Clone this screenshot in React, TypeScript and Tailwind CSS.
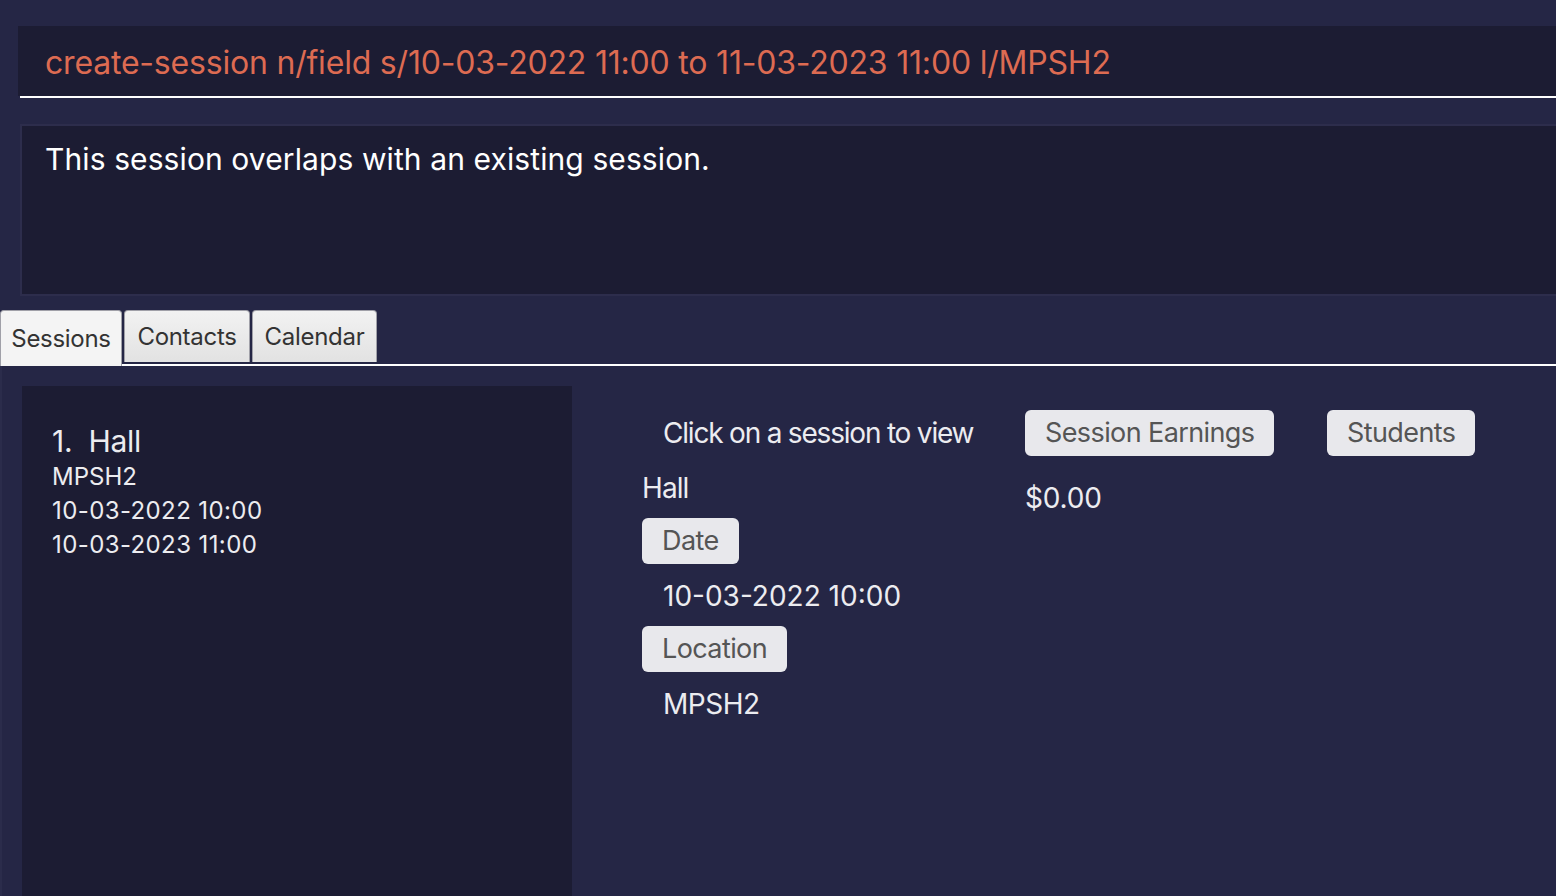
import {FC} from 'react';

const font = {fontFamily: 'Inter, "Noto Sans", sans-serif'};

const Pill: FC<{label: string; className?: string}> = ({label, className = ''}) => (
  <div
    className={`flex h-[46px] items-center rounded-md bg-[#e8e8ec] px-[20px] text-[27px] tracking-[-0.6px] text-[#555555] ${className}`}
  >
    {label}
  </div>
);

const Tab: FC<{label: string; active?: boolean; width: string}> = ({label, active, width}) => (
  <div
    className={`flex items-center justify-center rounded-t-[4px] border border-b-0 border-[#a0a0a8] text-[24px] tracking-[-0.3px] text-[#333333] ${width} ${
      active ? 'relative z-10 h-[56px] bg-[#f4f4f4]' : 'h-[52px] bg-gradient-to-b from-[#f2f2f2] to-[#e2e2e2]'
    }`}
  >
    {label}
  </div>
);

export default function App() {
  return (
    <div className="h-[896px] w-[1556px] overflow-hidden bg-[#252645]" style={font}>
      {/* command box */}
      <div className="pt-[26px] pl-[18px]">
        <div className="flex h-[70px] items-center bg-[#1c1c33] pt-[3px] pl-[27px] text-[32px] tracking-[-0.2px] text-[#dd6b52]">
          create-session n/field s/10-03-2022 11:00 to 11-03-2023 11:00 l/MPSH2
        </div>
        <div className="ml-[2px] h-[2px] bg-white" />
      </div>

      {/* result box */}
      <div className="mt-[26px] ml-[20px] h-[172px] border-2 border-r-0 border-[#2d2d4c] bg-[#1c1c33] pt-[11px] pl-[23px] text-[30px] tracking-[0.1px] text-white">
        This session overlaps with an existing session.
      </div>

      {/* tabs */}
      <div className="mt-[14px] flex items-start gap-[2px]">
        <Tab label="Sessions" active width="w-[122px]" />
        <Tab label="Contacts" width="w-[126px]" />
        <Tab label="Calendar" width="w-[125px]" />
      </div>
      <div className="-mt-[2px] h-[2px] bg-white" />

      {/* content */}
      <div className="flex h-[600px] border-l-2 border-[#2b2c4b] pt-[20px] pl-[20px]">
        <div className="w-[550px] shrink-0 bg-[#1c1c33] pt-[38px] pl-[30px] text-[#ececf0]">
          <div className="text-[30px] leading-[34px] tracking-[-0.3px]">1.&nbsp; Hall</div>
          <div className="mt-[2px] text-[24px] leading-[34px]">MPSH2</div>
          <div className="text-[24px] leading-[34px] tracking-[0.4px]">10-03-2022 10:00</div>
          <div className="text-[24px] leading-[34px] tracking-[0.4px]">10-03-2023 11:00</div>
        </div>

        <div className="flex pt-[24px] pl-[70px] text-[#ececf0]">
          <div className="w-[383px] shrink-0">
            <div className="flex h-[46px] items-center pl-[21px] text-[28px] tracking-[-1.2px]">
              Click on a session to view
            </div>
            <div className="mt-[14px] text-[28px] leading-[36px] tracking-[-0.9px]">Hall</div>
            <div className="mt-[12px] flex">
              <Pill label="Date" />
            </div>
            <div className="mt-[11px] pl-[21px] text-[28px] leading-[42px]">10-03-2022 10:00</div>
            <div className="mt-[9px] flex">
              <Pill label="Location" />
            </div>
            <div className="mt-[11px] pl-[21px] text-[28px] leading-[42px] tracking-[-0.5px]">MPSH2</div>
          </div>
          <div className="w-[302px] shrink-0">
            <div className="flex">
              <Pill label="Session Earnings" />
            </div>
            <div className="mt-[24px] text-[28px] leading-[36px] tracking-[-0.2px]">$0.00</div>
          </div>
          <div>
            <div className="flex">
              <Pill label="Students" />
            </div>
          </div>
        </div>
      </div>
    </div>
  );
}
